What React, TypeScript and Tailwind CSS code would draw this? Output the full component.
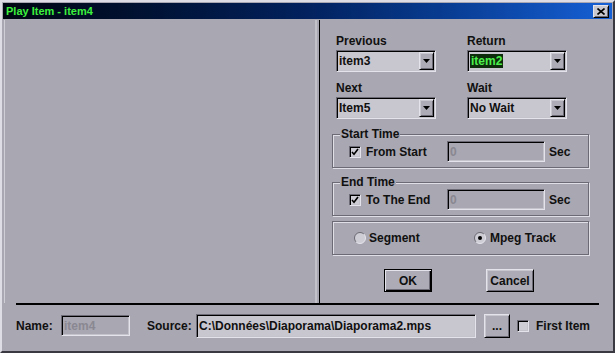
import React from "react";

const sunken =
  "border border-t-[#6c6a74] border-l-[#6c6a74] border-r-[#e4e2ea] border-b-[#e4e2ea] shadow-[inset_1px_1px_0_#000,inset_-1px_-1px_0_#c4c2ca]";
const raised =
  "border border-t-[#e4e2ea] border-l-[#e4e2ea] border-r-black border-b-black shadow-[inset_1px_1px_0_#c8c6ce,inset_-1px_-1px_0_#6c6a74] bg-[#adabb5]";
const etched =
  "border border-[#6c6a74] shadow-[1px_1px_0_#e0dee6,inset_1px_1px_0_#e0dee6]";

function DownArrow() {
  return (
    <svg width="7" height="4" viewBox="0 0 7 4">
      <path d="M0 0h7L3.5 4z" fill="#000" />
    </svg>
  );
}

function Combo({ value, highlight }: { value: string; highlight?: boolean }) {
  return (
    <div className={`flex h-[22px] w-[100px] items-center bg-[#c8c6ce] ${sunken}`}>
      <div className="flex-1 pl-[2px] text-[12px] leading-[14px]">
        {highlight ? (
          <span className="bg-[#0c2c0c] px-[1px] text-[#4cf04c]">{value}</span>
        ) : (
          value
        )}
      </div>
      <div className={`mr-[1px] flex h-[18px] w-[15px] items-center justify-center ${raised}`}>
        <DownArrow />
      </div>
    </div>
  );
}

function Check({ checked }: { checked?: boolean }) {
  return (
    <div className={`flex h-[12px] w-[12px] shrink-0 items-center justify-center bg-[#cecCd4] ${sunken}`}>
      {checked && (
        <svg width="8" height="8" viewBox="0 0 8 8">
          <path d="M1 4l2 2.2L7 1" stroke="#000" strokeWidth="1.6" fill="none" />
        </svg>
      )}
    </div>
  );
}

function Radio({ checked }: { checked?: boolean }) {
  return (
    <svg width="12" height="12" viewBox="0 0 12 12" className="shrink-0">
      <circle cx="6" cy="6" r="5.5" fill="#cecCd4" />
      <path d="M2.1 9.9A5.5 5.5 0 0 1 9.9 2.1" stroke="#6c6a74" fill="none" />
      <path d="M9.9 2.1A5.5 5.5 0 0 1 2.1 9.9" stroke="#e6e4ec" fill="none" />
      {checked && <circle cx="6" cy="6" r="2" fill="#000" />}
    </svg>
  );
}

function Field({ label }: { label: string }) {
  return (
    <div className="flex-col">
      <div className="h-[14px] leading-[14px]">{label}</div>
    </div>
  );
}

function TimeGroup({ title, check }: { title: string; check: string }) {
  return (
    <fieldset className={`w-[257px] pb-[5px] ${etched}`}>
      <legend className="ml-[7px] bg-[#a9a7b1] px-[1px] leading-[14px]">{title}</legend>
      <div className="flex h-[21px] items-center">
        <div className="ml-[16px]">
          <Check checked />
        </div>
        <div className="ml-[5px] w-[76px] leading-[14px]">{check}</div>
        <div className={`ml-[5px] flex h-[21px] w-[98px] items-center pl-[2px] text-[#8a8892] ${sunken}`}>
          0
        </div>
        <div className="ml-[4px]">Sec</div>
      </div>
    </fieldset>
  );
}

export default function App() {
  return (
    <div className="flex h-[353px] w-[615px] flex-col border-2 border-t-[#dedce4] border-l-[#dedce4] border-r-[#3a3840] border-b-[#3a3840] bg-[#a9a7b1] font-['Liberation_Sans',Arial,sans-serif] text-[12px] font-bold text-[#101010]">
      {/* Title bar */}
      <div className="mx-[1px] mt-[1px] flex h-[16px] items-center bg-gradient-to-r from-[#000612] via-[#02215e] to-[#1660d6] pl-[3px] pr-[3px]">
        <span className="text-[11px] leading-[14px] text-[#3cf03c]">Play Item - item4</span>
        <div className="flex-1" />
        <div className={`flex h-[13px] w-[16px] items-center justify-center ${raised} bg-[#c8c6ce]`}>
          <svg width="8" height="7" viewBox="0 0 8 7">
            <path d="M0.5 0.5L7.5 6.5M7.5 0.5L0.5 6.5" stroke="#000" strokeWidth="1.6" />
          </svg>
        </div>
      </div>

      {/* Main area */}
      <div className="mt-[1px] flex h-[283px]">
        <div className="flex w-[317px]">
          <div className="ml-[2px] mr-[2px] flex-1 border-l border-r-2 border-l-[#cfcdd5] border-r-[#c2c0c8]" />
        </div>
        <div className="w-[1px] bg-black" />
        <div className="flex flex-1 flex-col pl-[12px]">
          <div className="ml-[4px] mt-[14px] grid grid-cols-[100px_100px] gap-x-[31px] gap-y-[9px]">
            <div className="flex flex-col gap-[2px]">
              <div className="h-[14px] leading-[14px]">Previous</div>
              <Combo value="item3" />
            </div>
            <div className="flex flex-col gap-[2px]">
              <div className="h-[14px] leading-[14px]">Return</div>
              <Combo value="item2" highlight />
            </div>
            <div className="flex flex-col gap-[2px]">
              <div className="h-[14px] leading-[14px]">Next</div>
              <Combo value="Item5" />
            </div>
            <div className="flex flex-col gap-[2px]">
              <div className="h-[14px] leading-[14px]">Wait</div>
              <Combo value="No Wait" />
            </div>
          </div>

          <div className="mt-[8px]">
            <TimeGroup title="Start Time" check="From Start" />
          </div>
          <div className="mt-[7px]">
            <TimeGroup title="End Time" check="To The End" />
          </div>

          <div className={`mt-[5px] flex h-[34px] w-[257px] items-center ${etched}`}>
            <div className="ml-[21px] flex w-[120px] items-center">
              <Radio />
              <span className="ml-[3px]">Segment</span>
            </div>
            <div className="flex items-center">
              <Radio checked />
              <span className="ml-[4px]">Mpeg Track</span>
            </div>
          </div>

          <div className="mt-[14px] flex">
            <button className="ml-[52px] flex h-[23px] w-[48px] items-center justify-center border border-black bg-[#adabb5] shadow-[inset_1px_1px_0_#e4e2ea,inset_-1px_-1px_0_#000,inset_-2px_-2px_0_#6c6a74]">
              OK
            </button>
            <button className={`ml-[54px] flex h-[23px] w-[48px] items-center justify-center ${raised}`}>
              Cancel
            </button>
          </div>
        </div>
      </div>

      <div className="ml-[14px] h-[2px] w-[583px] bg-black" />

      {/* Bottom row */}
      <div className="flex flex-1 items-center pb-[5px] pl-[14px]">
        <div className="w-[45px]">Name:</div>
        <div className={`flex h-[21px] w-[69px] items-center pl-[2px] text-[#8a8892] ${sunken}`}>item4</div>
        <div className="ml-[17px] w-[49px]">Source:</div>
        <div className={`flex h-[24px] w-[280px] items-center bg-[#c8c6ce] pl-[2px] ${sunken}`}>
          C:\Données\Diaporama\Diaporama2.mps
        </div>
        <button className={`ml-[8px] flex h-[24px] w-[26px] items-center justify-center ${raised}`}>...</button>
        <div className="ml-[7px]">
          <Check />
        </div>
        <div className="ml-[7px]">First Item</div>
      </div>
    </div>
  );
}
